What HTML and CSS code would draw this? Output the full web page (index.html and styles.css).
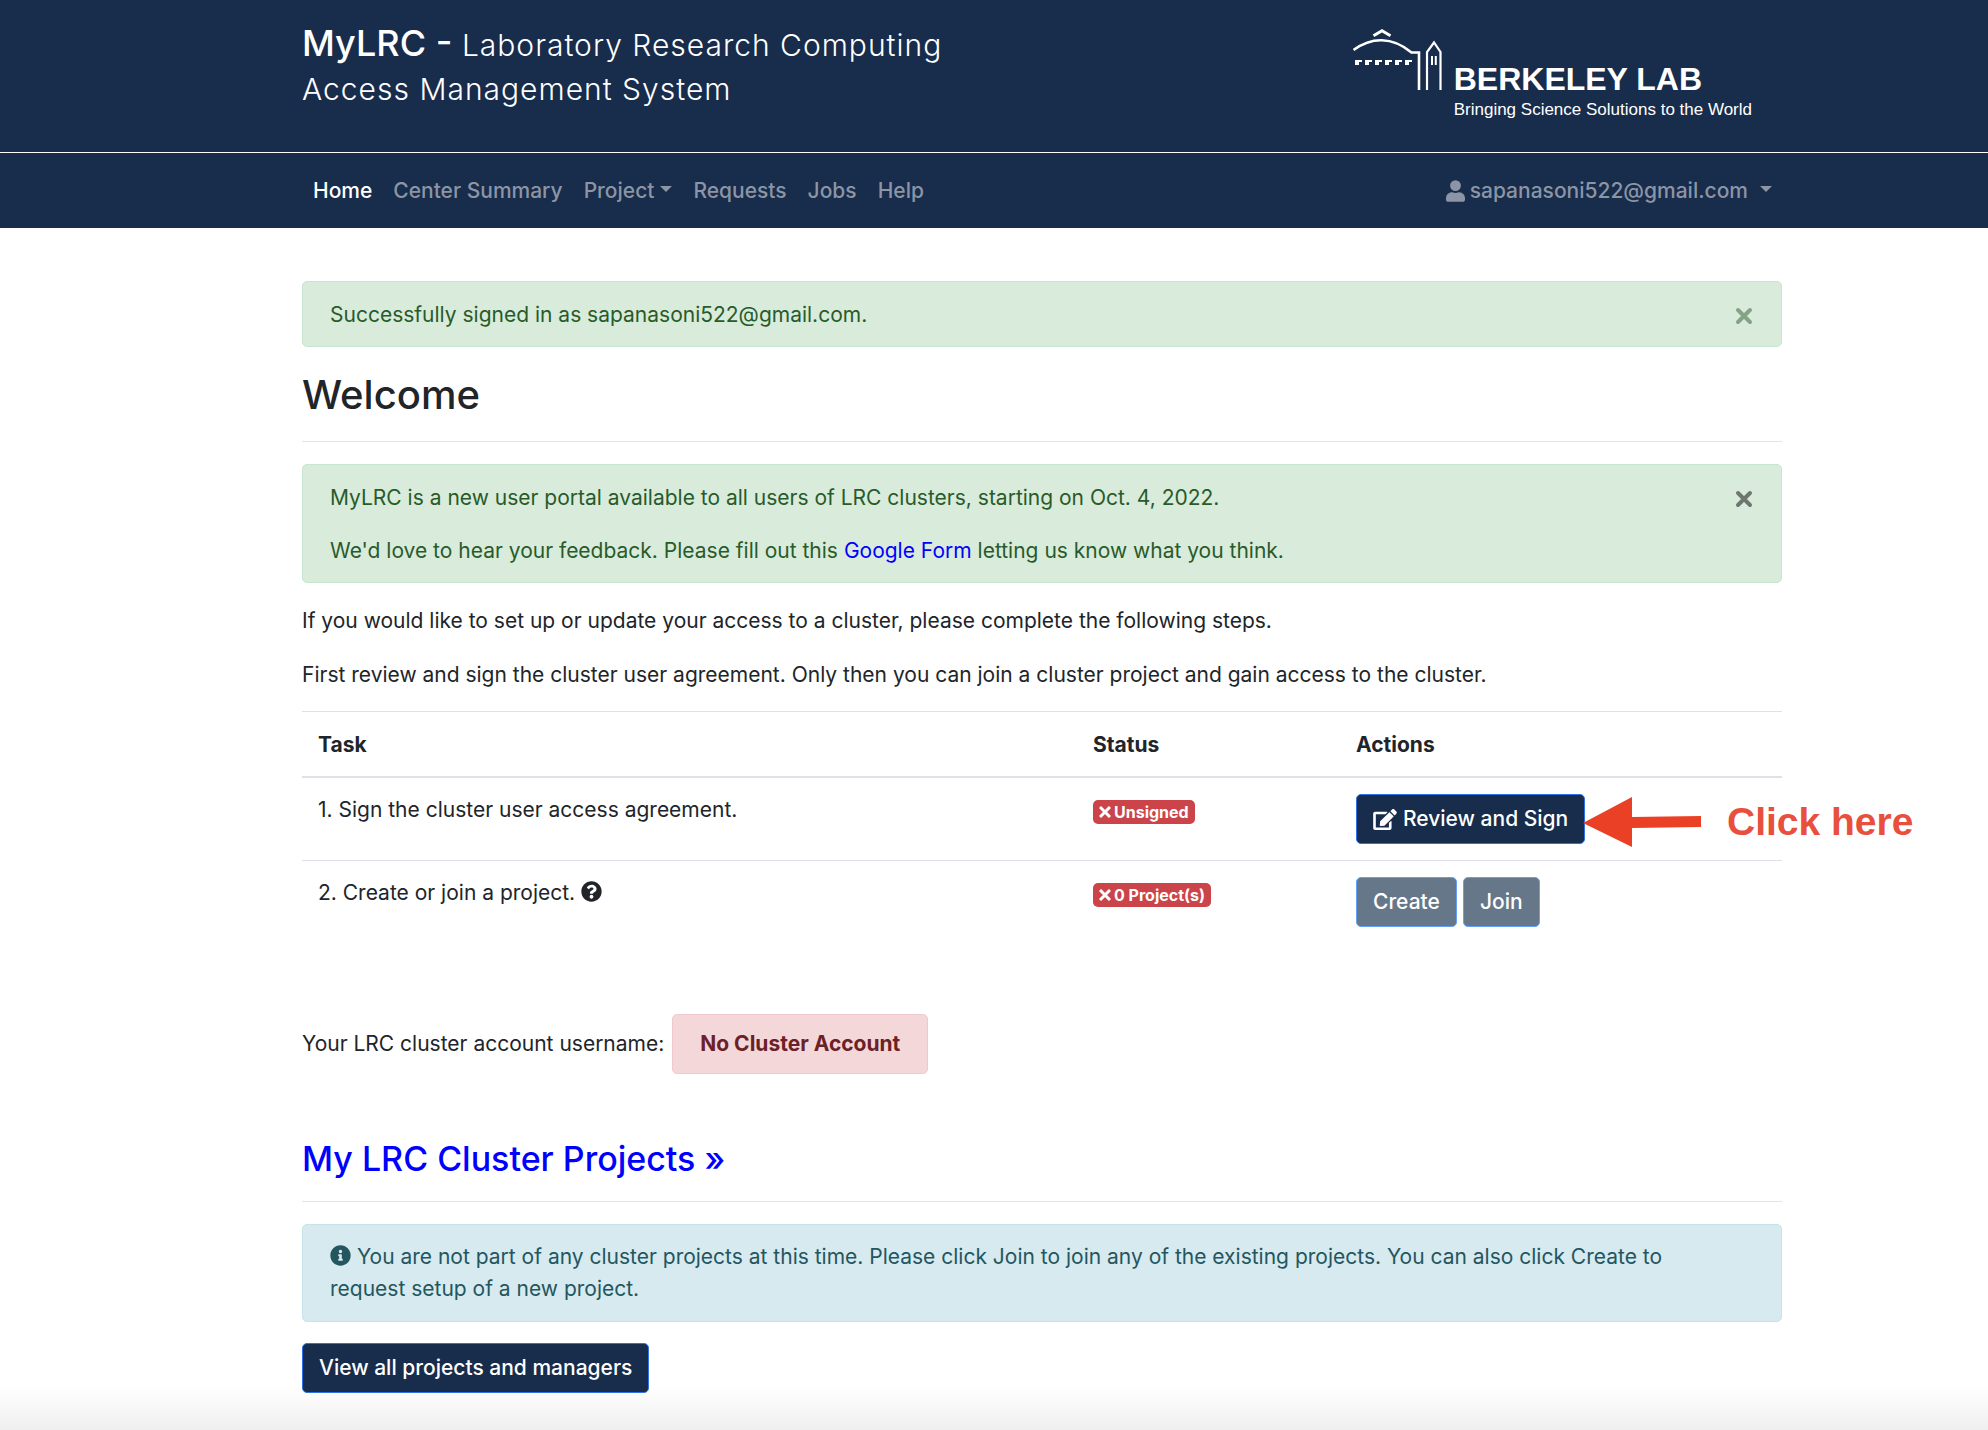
FILE: index.html
```html
<!DOCTYPE html>
<html lang="en">
<head>
<meta charset="utf-8">
<meta name="viewport" content="width=device-width, initial-scale=1">
<title>MyLRC</title>
<link rel="stylesheet" href="styles.css">
</head>
<body>
<header class="masthead">
  <div class="container masthead-row">
    <h1 class="brand">MyLRC - <span class="brand-sub">Laboratory Research Computing Access Management System</span></h1>
    <a class="logo" href="#">
      <svg class="logo-mark" viewBox="0 0 90 62" aria-hidden="true">
        <g fill="none" stroke="#fff">
          <path d="M20.500 6.800 29 1.800 37.500 6.800" stroke-width="3"/>
          <path d="M.5 21C18 8 39 7 58.500 23.500H66V61" stroke-width="2.600"/>
          <path d="M74 61V23L81 13.500 87.500 23V61" stroke-width="2.200"/>
          <path d="M79 27V36M82.800 27V36" stroke-width="2"/>
        </g>
        <path fill="#fff" d="M2 31h7v2H6v3H2zM12 31h7v2h-3v3h-4zM22 31h7v2h-3v3h-4zM32 31h7v2h-3v3h-4zM42 31h7v2h-3v3h-4zM52 31h7v2h-3v3h-4z"/>
      </svg>
      <span class="logo-text"><strong class="logo-name">BERKELEY LAB</strong><span class="logo-tag">Bringing Science Solutions to the World</span></span>
    </a>
  </div>
</header>
<nav class="navbar">
  <div class="container nav-row">
    <a class="nav-link active" href="#">Home</a>
    <a class="nav-link" href="#">Center Summary</a>
    <a class="nav-link" href="#">Project<span class="caret"></span></a>
    <a class="nav-link" href="#">Requests</a>
    <a class="nav-link" href="#">Jobs</a>
    <a class="nav-link" href="#">Help</a>
    <a class="nav-link user" href="#"><svg class="user-icon" viewBox="0 0 448 512" aria-hidden="true"><path fill="currentColor" d="M224 256a128 128 0 1 0 0-256 128 128 0 0 0 0 256zm90 32h-17a174 174 0 0 1-146 0h-17A134 134 0 0 0 0 422v42c0 27 21 48 48 48h352c27 0 48-21 48-48v-42a134 134 0 0 0-134-134z"/></svg>sapanasoni522@gmail.com<span class="caret caret-user"></span></a>
  </div>
</nav>
<main class="container content">
  <div class="alert success" role="alert">
    <p>Successfully signed in as sapanasoni522@gmail.com.</p>
    <button class="close close-green" type="button" aria-label="Close"><svg viewBox="0 0 18 18" aria-hidden="true"><path d="M3 3l12 12M15 3L3 15"/></svg></button>
  </div>
  <h2 class="welcome">Welcome</h2>
  <hr>
  <div class="alert success" role="alert">
    <div class="alert-body">
      <p>MyLRC is a new user portal available to all users of LRC clusters, starting on Oct. 4, 2022.</p>
      <p>We'd love to hear your feedback. Please fill out this <a href="#">Google Form</a> letting us know what you think.</p>
    </div>
    <button class="close" type="button" aria-label="Close"><svg viewBox="0 0 18 18" aria-hidden="true"><path d="M3 3l12 12M15 3L3 15"/></svg></button>
  </div>
  <p class="para">If you would like to set up or update your access to a cluster, please complete the following steps.</p>
  <p class="para">First review and sign the cluster user agreement. Only then you can join a cluster project and gain access to the cluster.</p>
  <table class="tasks">
    <thead><tr><th class="col-task">Task</th><th class="col-status">Status</th><th>Actions</th></tr></thead>
    <tbody>
      <tr>
        <td>1. Sign the cluster user access agreement.</td>
        <td><span class="badge"><svg viewBox="0 0 12 12" aria-hidden="true"><path d="M1 1l10 10M11 1l-10 10"/></svg>Unsigned</span></td>
        <td>
          <div class="actions">
            <button class="btn" type="button"><svg class="edit-icon" viewBox="0 0 576 512" aria-hidden="true"><path fill="currentColor" d="M402.600 83.200l90.200 90.200c3.800 3.800 3.800 10 0 13.800L274.400 405.600l-92.800 10.300c-12.400 1.400-22.900-9.100-21.500-21.500l10.300-92.800L388.800 83.200c3.800-3.800 10-3.800 13.800 0zm162-22.900l-48.800-48.800c-15.200-15.200-39.900-15.200-55.200 0l-35.400 35.400c-3.800 3.800-3.800 10 0 13.800l90.200 90.200c3.800 3.800 10 3.800 13.800 0l35.400-35.400c15.200-15.300 15.200-40 0-55.200zM384 346.200V448H64V128h229.800c3.200 0 6.200-1.300 8.500-3.500l40-40c7.600-7.600 2.200-20.500-8.500-20.500H48C21.500 64 0 85.500 0 112v352c0 26.500 21.500 48 48 48h352c26.500 0 48-21.500 48-48V306.200c0-10.700-12.900-16-20.500-8.500l-40 40c-2.200 2.300-3.500 5.300-3.500 8.500z"/></svg>Review and Sign</button>
            <div class="callout">
              <svg viewBox="0 0 118 50" aria-hidden="true"><path fill="#ea4025" d="M0 26 49 0v20l69-1v11l-69 1v19z"/></svg>
              <span>Click here</span>
            </div>
          </div>
        </td>
      </tr>
      <tr>
        <td>2. Create or join a project. <svg class="inline-icon" viewBox="0 0 512 512" aria-label="Help"><path fill="currentColor" d="M504 256c0 137-111 248-248 248S8 393 8 256 119 8 256 8s248 111 248 248zM262.700 90c-54.500 0-89.300 23-116.500 63.800-3.500 5.300-2.400 12.400 2.700 16.300l34.700 26.300c5.200 3.900 12.600 3 16.700-2.100 17.900-22.700 30.100-35.800 57.300-35.800 20.400 0 45.700 13.100 45.700 33 0 15-12.400 22.700-32.500 34C247 238.500 216 254.900 216 296v4c0 6.600 5.400 12 12 12h56c6.600 0 12-5.400 12-12v-1.300c0-28.500 83.200-29.600 83.200-106.700 0-58-60.200-102-116.500-102zM256 338c-25.400 0-46 20.600-46 46s20.600 46 46 46 46-20.600 46-46-20.600-46-46-46z"/></svg></td>
        <td><span class="badge"><svg viewBox="0 0 12 12" aria-hidden="true"><path d="M1 1l10 10M11 1l-10 10"/></svg>0 Project(s)</span></td>
        <td><div class="actions"><button class="btn" type="button" disabled>Create</button><button class="btn" type="button" disabled>Join</button></div></td>
      </tr>
    </tbody>
  </table>
  <div class="account"><span>Your LRC cluster account username:</span><strong class="no-account">No Cluster Account</strong></div>
  <h3 class="projects"><a href="#">My LRC Cluster Projects »</a></h3>
  <hr>
  <div class="alert info">
    <p><svg class="inline-icon" viewBox="0 0 512 512" aria-hidden="true"><path fill="currentColor" d="M256 8C119 8 8 119 8 256s111 248 248 248 248-111 248-248S393 8 256 8zm0 110a42 42 0 1 1 0 84 42 42 0 0 1 0-84zm56 254c0 6.600-5.400 12-12 12h-88c-6.600 0-12-5.400-12-12v-24c0-6.600 5.400-12 12-12h12v-64h-12c-6.600 0-12-5.400-12-12v-24c0-6.600 5.400-12 12-12h64c6.600 0 12 5.400 12 12v100h12c6.600 0 12 5.400 12 12z"/></svg> You are not part of any cluster projects at this time. Please click Join to join any of the existing projects. You can also click Create to request setup of a new project.</p>
  </div>
  <a class="btn" href="#">View all projects and managers</a>
</main>
</body>
</html>
```
FILE: styles.css
```css
* { box-sizing: border-box; }
body {
  margin: 0;
  min-height: 100vh;
  display: flex;
  flex-direction: column;
  background: #fff;
  color: #212529;
  font: 400 21px/32px Inter, "Liberation Sans", sans-serif;
}
h1, h2, h3, p { margin: 0; }
a { color: #00f; text-decoration: none; }
svg { display: block; }
.container { width: 100%; padding: 0 206px 0 302px; }

.masthead { background: #182c4b; border-bottom: 1px solid #fff; }
.masthead-row { display: flex; justify-content: space-between; min-height: 152px; }
.brand { width: 700px; padding-top: 21px; color: #fff; font-size: 36px; font-weight: 500; line-height: 44px; }
.brand-sub { font-size: 30px; font-weight: 300; line-height: 32px; letter-spacing: 1px; }
.logo { display: flex; gap: 11px; padding: 29px 30px 0 0; color: #fff; }
.logo-mark { width: 90px; height: 62px; }
.logo-text { display: flex; flex-direction: column; padding-top: 32px; font-family: "Liberation Sans", sans-serif; }
.logo-name { font-size: 32px; line-height: 36px; }
.logo-tag { font-size: 17px; line-height: 26px; }

.navbar { background: #182c4b; }
.nav-row { display: flex; align-items: center; min-height: 75px; padding-top: 1px; }
.nav-link { display: flex; align-items: center; padding: 0 10px 0 11px; color: #8b95a5; font-weight: 500; }
.nav-link.active { color: #fff; }
.caret { margin-left: 6px; margin-bottom: 4px; border: 6px solid transparent; border-top-color: currentColor; border-bottom: 0; }
.caret-user { margin-left: 12px; }
.user { margin-left: auto; }
.user-icon { width: 19px; height: 22px; margin-right: 5px; }

.content {
  flex: 1;
  padding-top: 53px;
  padding-bottom: 37px;
  background: linear-gradient(rgba(239, 239, 239, 0), #efefef) bottom / 100% 44px no-repeat;
}
.alert { display: flex; justify-content: space-between; align-items: flex-start; padding: 17px 27px 15px; border: 1px solid; border-radius: 5px; }
.success { background: #d9ebdb; border-color: #c8e5ce; color: #285b2a; }
.info { background: #d6eaef; border-color: #c5e4ea; color: #245660; margin-bottom: 21px; padding: 16px 80px 16px 27px; }
.alert-body { display: grid; gap: 21px; }
.close { margin: 0; padding: 8px 1px 0; border: 0; background: none; color: #6e776f; }
.close-green { color: #83a387; }
.close svg { width: 18px; height: 18px; }
.close path { fill: none; stroke: currentColor; stroke-width: 4; stroke-linecap: round; }
hr { margin: 21px 0 22px; border: 0; border-top: 1px solid #e3e4e5; }
.welcome { padding-top: 23px; font-size: 40px; font-weight: 500; line-height: 50px; }
.para { margin-top: 22px; }

.tasks { width: 100%; margin-top: 20px; border-collapse: collapse; table-layout: fixed; }
.tasks th, .tasks td { padding: 16px; border-top: 1px solid #dee2e6; text-align: left; vertical-align: top; }
.tasks th { padding: 17px 16px 15px; border-bottom: 2px solid #dee2e6; font-weight: 700; }
.col-task { width: 775px; }
.col-status { width: 263px; }
.badge { display: inline-flex; align-items: center; gap: 3px; height: 24px; margin-top: 6px; padding: 0 6px; border-radius: 5px; background: #cb444a; color: #fff; font-size: 16px; font-weight: 700; line-height: 24px; vertical-align: top; }
.badge svg { width: 12px; height: 12px; }
.badge path { fill: none; stroke: currentColor; stroke-width: 3; }
.actions { position: relative; display: flex; gap: 6px; }
.btn { display: inline-flex; align-items: center; margin: 0; padding: 8px 16px; border: 1px solid #2f72e8; border-radius: 5px; background: #182c4b; color: #fff; font: inherit; font-weight: 500; white-space: nowrap; }
.btn:disabled { border-color: #64a0f4; background: #66778a; }
.edit-icon { width: 24px; height: 21px; margin-right: 6px; }
.inline-icon { display: inline-block; width: 21px; height: 21px; vertical-align: -2px; }
.callout { position: absolute; left: 227px; top: 2px; display: flex; align-items: center; gap: 26px; color: #e94f3d; font: 700 39px/52px "Liberation Sans", sans-serif; white-space: nowrap; }
.callout svg { width: 118px; height: 50px; }

.account { display: flex; align-items: center; gap: 8px; margin-top: 71px; }
.no-account { padding: 13px 27px; border: 1px solid #efc9cd; border-radius: 5px; background: #f3d7d9; color: #6b2127; }
.projects { margin-top: 63px; font-size: 34px; font-weight: 500; line-height: 43px; }
```
